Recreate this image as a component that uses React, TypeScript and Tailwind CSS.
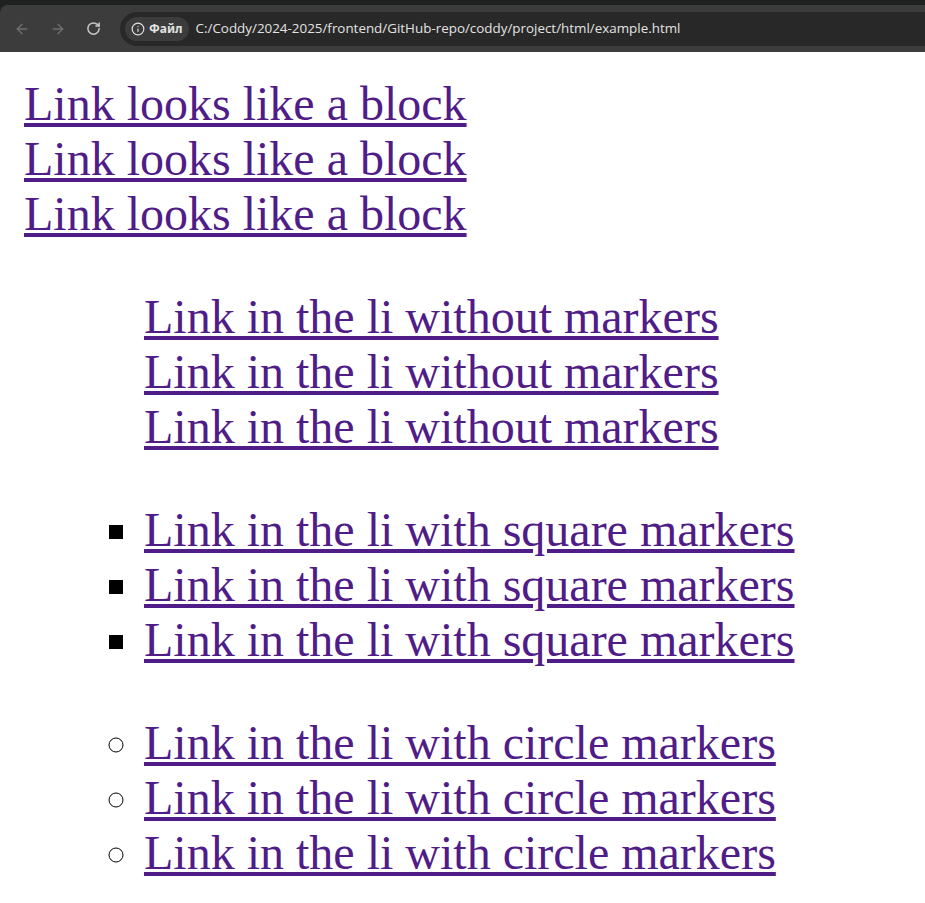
import { ArrowLeft, ArrowRight, RotateCw, Info } from 'lucide-react';

const serif = { fontFamily: '"Liberation Serif", "Times New Roman", serif' };

function BrowserBar() {
  return (
    <div className="bg-[#1f2020] pt-[5px]">
      <div className="flex h-[47px] items-center rounded-tl-[8px] bg-[#3c3c3c]">
        <div className="flex w-[120px] items-center pl-[14px] gap-[20px]">
          <ArrowLeft size={16} strokeWidth={2} className="text-[#6e6e6e]" />
          <ArrowRight size={16} strokeWidth={2} className="text-[#6e6e6e]" />
          <RotateCw size={15} strokeWidth={2.4} className="text-[#c8c8c8]" />
        </div>
        <div className="flex h-[34px] flex-1 items-center rounded-l-full bg-[#282828] pl-[5px]">
          <div className="flex h-[24px] items-center gap-[4px] rounded-full bg-[#3c3c3c] pl-[6px] pr-[6px]">
            <Info size={14} strokeWidth={2} className="text-[#e3e3e3]" />
            <span
              className="text-[12px] font-bold text-[#e3e3e3]"
              style={{ fontFamily: '"Noto Sans", "DejaVu Sans", sans-serif' }}
            >
              Файл
            </span>
          </div>
          <span
            className="ml-[7px] text-[13.4px] text-[#e3e3e3]"
            style={{ fontFamily: '"Open Sans", "Noto Sans", sans-serif' }}
          >
            C:/Coddy/2024-2025/frontend/GitHub-repo/coddy/project/html/example.html
          </span>
        </div>
      </div>
    </div>
  );
}

const linkCls = 'text-[#4f1c88] underline';

export default function App() {
  return (
    <div className="min-h-screen bg-white">
      <BrowserBar />
      <div className="p-[24px] text-[48px] leading-[55px] text-black" style={serif}>
        <a href="#" className={`block ${linkCls}`}>Link looks like a block</a>
        <a href="#" className={`block ${linkCls}`}>Link looks like a block</a>
        <a href="#" className={`block ${linkCls}`}>Link looks like a block</a>

        <ul className="my-[48px] list-none pl-[120px]">
          <li><a href="#" className={linkCls}>Link in the li without markers</a></li>
          <li><a href="#" className={linkCls}>Link in the li without markers</a></li>
          <li><a href="#" className={linkCls}>Link in the li without markers</a></li>
        </ul>

        <ul className="my-[48px] list-[square] pl-[120px]">
          <li><a href="#" className={linkCls}>Link in the li with square markers</a></li>
          <li><a href="#" className={linkCls}>Link in the li with square markers</a></li>
          <li><a href="#" className={linkCls}>Link in the li with square markers</a></li>
        </ul>

        <ul className="my-[48px] list-[circle] pl-[120px]">
          <li><a href="#" className={linkCls}>Link in the li with circle markers</a></li>
          <li><a href="#" className={linkCls}>Link in the li with circle markers</a></li>
          <li><a href="#" className={linkCls}>Link in the li with circle markers</a></li>
        </ul>
      </div>
    </div>
  );
}
